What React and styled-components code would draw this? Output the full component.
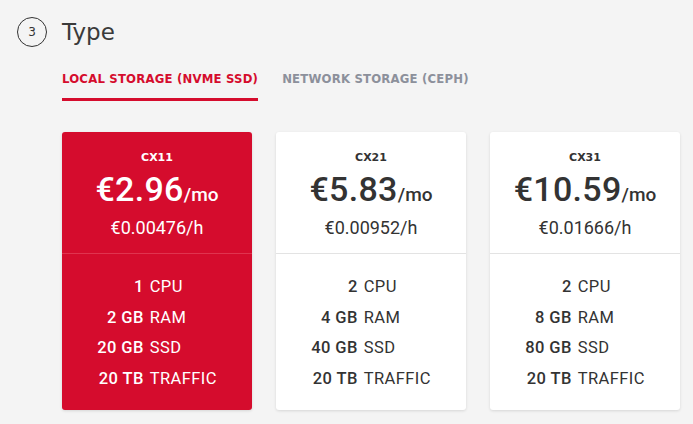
import React from 'react';
import styled, { createGlobalStyle } from 'styled-components';

const GlobalStyle = createGlobalStyle`
  html, body {
    margin: 0;
    padding: 0;
    background: #f4f4f4;
  }
  body {
    font-family: Roboto, "Liberation Sans", sans-serif;
    color: #333;
  }
`;

const Page = styled.div`
  width: 693px;
  height: 424px;
  overflow: hidden;
  padding: 17px 0 0 17px;
  box-sizing: border-box;
`;

const Heading = styled.div`
  display: flex;
  align-items: center;
  gap: 15px;
  height: 30px;
`;

const StepBadge = styled.div`
  width: 30px;
  height: 30px;
  box-sizing: border-box;
  border: 1.5px solid #333;
  border-radius: 50%;
  display: flex;
  align-items: center;
  justify-content: center;
  font-family: "DejaVu Sans", sans-serif;
  font-size: 12px;
  color: #333;
`;

const Title = styled.h2`
  margin: 0;
  font-family: "DejaVu Sans", sans-serif;
  font-weight: 400;
  font-size: 23px;
  color: #3a3a3a;
`;

const Body = styled.div`
  padding-left: 45px;
`;

const Tabs = styled.div`
  display: flex;
  gap: 24px;
  margin-top: 18px;
`;

const Tab = styled.div`
  font-family: "DejaVu Sans", sans-serif;
  font-weight: 700;
  font-size: 11.7px;
  letter-spacing: 0.2px;
  text-transform: uppercase;
  color: ${({ active }) => (active ? '#d50c2d' : '#8c909b')};
  padding: 7px 0 12px;
  border-bottom: 3px solid ${({ active }) => (active ? '#d50c2d' : 'transparent')};
`;

const Cards = styled.div`
  display: flex;
  gap: 24px;
  margin-top: 31px;
`;

const Card = styled.div`
  width: 190px;
  height: 278px;
  box-sizing: border-box;
  border-radius: 3px;
  background: ${({ selected }) => (selected ? '#d50c2d' : '#fff')};
  color: ${({ selected }) => (selected ? '#fff' : '#333')};
  box-shadow: 0 1px 3px rgba(0, 0, 0, 0.12);
  display: flex;
  flex-direction: column;
`;

const Top = styled.div`
  height: 122px;
  box-sizing: border-box;
  display: flex;
  flex-direction: column;
  align-items: center;
  padding-top: 19px;
  border-bottom: 1px solid ${({ selected }) => (selected ? '#e0344f' : '#e3e3e3')};
`;

const Name = styled.div`
  font-family: "DejaVu Sans", sans-serif;
  font-weight: 700;
  font-size: 11px;
  line-height: 14px;
`;

const Price = styled.div`
  margin-top: 5px;
  font-size: 34px;
  font-weight: 500;
  line-height: 38px;
  letter-spacing: 0.3px;
`;

const Per = styled.span`
  font-size: 19px;
  letter-spacing: 0;
`;

const Hourly = styled.div`
  margin-top: 3px;
  font-size: 18px;
  line-height: 22px;
`;

const Specs = styled.div`
  display: grid;
  grid-template-columns: auto auto;
  justify-content: center;
  column-gap: 6px;
  row-gap: 11px;
  padding-top: 23px;
  font-size: 16.5px;
  line-height: 19.5px;
  letter-spacing: 0.4px;
`;

const Value = styled.span`
  font-weight: 500;
  text-align: right;
`;

const Unit = styled.span`
  text-align: left;
`;

const plans = [
  { name: 'CX11', price: '€2.96', hour: '€0.00476/h', cpu: '1', ram: '2 GB', ssd: '20 GB', traffic: '20 TB', selected: true },
  { name: 'CX21', price: '€5.83', hour: '€0.00952/h', cpu: '2', ram: '4 GB', ssd: '40 GB', traffic: '20 TB' },
  { name: 'CX31', price: '€10.59', hour: '€0.01666/h', cpu: '2', ram: '8 GB', ssd: '80 GB', traffic: '20 TB' },
];

function PlanCard({ plan }) {
  const rows = [
    [plan.cpu, 'CPU'],
    [plan.ram, 'RAM'],
    [plan.ssd, 'SSD'],
    [plan.traffic, 'TRAFFIC'],
  ];
  return (
    <Card selected={plan.selected}>
      <Top selected={plan.selected}>
        <Name>{plan.name}</Name>
        <Price>
          {plan.price}
          <Per>/mo</Per>
        </Price>
        <Hourly>{plan.hour}</Hourly>
      </Top>
      <Specs>
        {rows.map(([v, u]) => (
          <React.Fragment key={u}>
            <Value>{v}</Value>
            <Unit>{u}</Unit>
          </React.Fragment>
        ))}
      </Specs>
    </Card>
  );
}

export default function App() {
  return (
    <Page>
      <GlobalStyle />
      <Heading>
        <StepBadge>3</StepBadge>
        <Title>Type</Title>
      </Heading>
      <Body>
        <Tabs>
          <Tab active>Local storage (NVMe SSD)</Tab>
          <Tab>Network storage (CEPH)</Tab>
        </Tabs>
        <Cards>
          {plans.map((p) => (
            <PlanCard key={p.name} plan={p} />
          ))}
        </Cards>
      </Body>
    </Page>
  );
}
